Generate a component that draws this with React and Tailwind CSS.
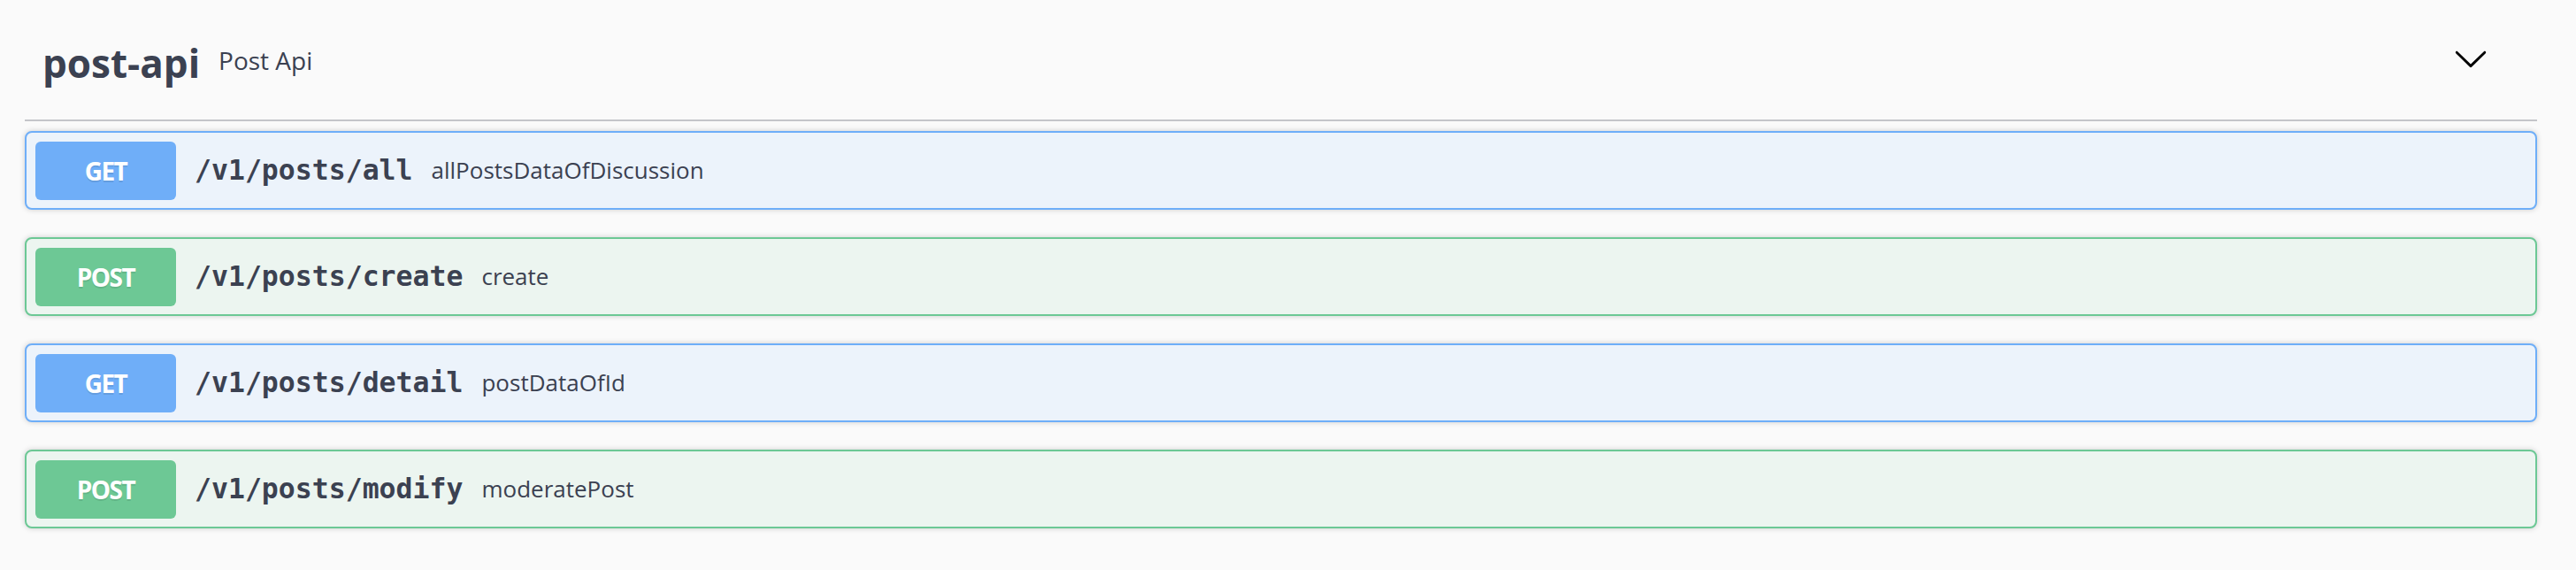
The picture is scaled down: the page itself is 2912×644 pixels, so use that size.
const ops = [
	{ method: "GET", path: "/v1/posts/all", summary: "allPostsDataOfDiscussion" },
	{ method: "POST", path: "/v1/posts/create", summary: "create" },
	{ method: "GET", path: "/v1/posts/detail", summary: "postDataOfId" },
	{ method: "POST", path: "/v1/posts/modify", summary: "moderatePost" },
];

const styles = {
	GET: {
		block: "border-[#6eaef8] bg-[#ecf3fb]",
		badge: "bg-[#6faef8]",
	},
	POST: {
		block: "border-[#6cc895] bg-[#ecf5f0]",
		badge: "bg-[#6dc895]",
	},
};

const OpBlock = ({ method, path, summary }) => {
	const s = styles[method];
	return (
		<div
			className={`flex items-center h-[89px] px-[10px] border-2 rounded-[8px] shadow-[0_0_6px_rgba(0,0,0,0.19)] ${s.block}`}
		>
			<span
				className={`flex items-center justify-center w-[159px] h-[66px] rounded-[6px] text-white text-[28px] font-bold tracking-[-1.5px] [text-shadow:0_2px_0_rgba(0,0,0,0.1)] ${s.badge}`}
				style={{ fontFamily: '"Open Sans", sans-serif' }}
			>
				{method}
			</span>
			<span
				className="px-[21px] text-[31.5px] font-bold text-[#3b4151]"
				style={{ fontFamily: '"DejaVu Sans Mono", monospace' }}
			>
				{path}
			</span>
			<span
				className="text-[26px] text-[#3b4151]"
				style={{ fontFamily: '"Open Sans", sans-serif' }}
			>
				{summary}
			</span>
		</div>
	);
};

const App = () => {
	return (
		<div className="w-[2912px] h-[644px] bg-[#fafafa] pl-[28px] pr-[44px] overflow-hidden">
			<div className="flex items-center h-[137px] border-b-2 border-[#c4c5ca]">
				<h4
					className="ml-[20px] mt-[7px] text-[44px] font-bold text-[#3b4151] leading-[60px]"
					style={{ fontFamily: '"Open Sans", sans-serif' }}
				>
					post-api
				</h4>
				<span
					className="ml-[21px] mt-[0px] text-[28px] text-[#3b4151] leading-[38px]"
					style={{ fontFamily: '"Open Sans", sans-serif' }}
				>
					Post Api
				</span>
				<div className="flex-1" />
				<svg
					width="40"
					height="40"
					viewBox="0 0 20 20"
					className="mr-[55px] mt-[-4px]"
				>
					<path
						fill="#000"
						d="M17.418 6.109c.272-.268.709-.268.979 0s.271.701 0 .969l-7.908 7.83c-.27.268-.707.268-.979 0l-7.908-7.83c-.27-.268-.27-.701 0-.969.271-.268.709-.268.979 0L10 13.25l7.418-7.141z"
					/>
				</svg>
			</div>
			<div className="flex flex-col gap-[31px] mt-[11px]">
				{ops.map((op) => (
					<OpBlock key={op.path} {...op} />
				))}
			</div>
		</div>
	);
};

export default App;
